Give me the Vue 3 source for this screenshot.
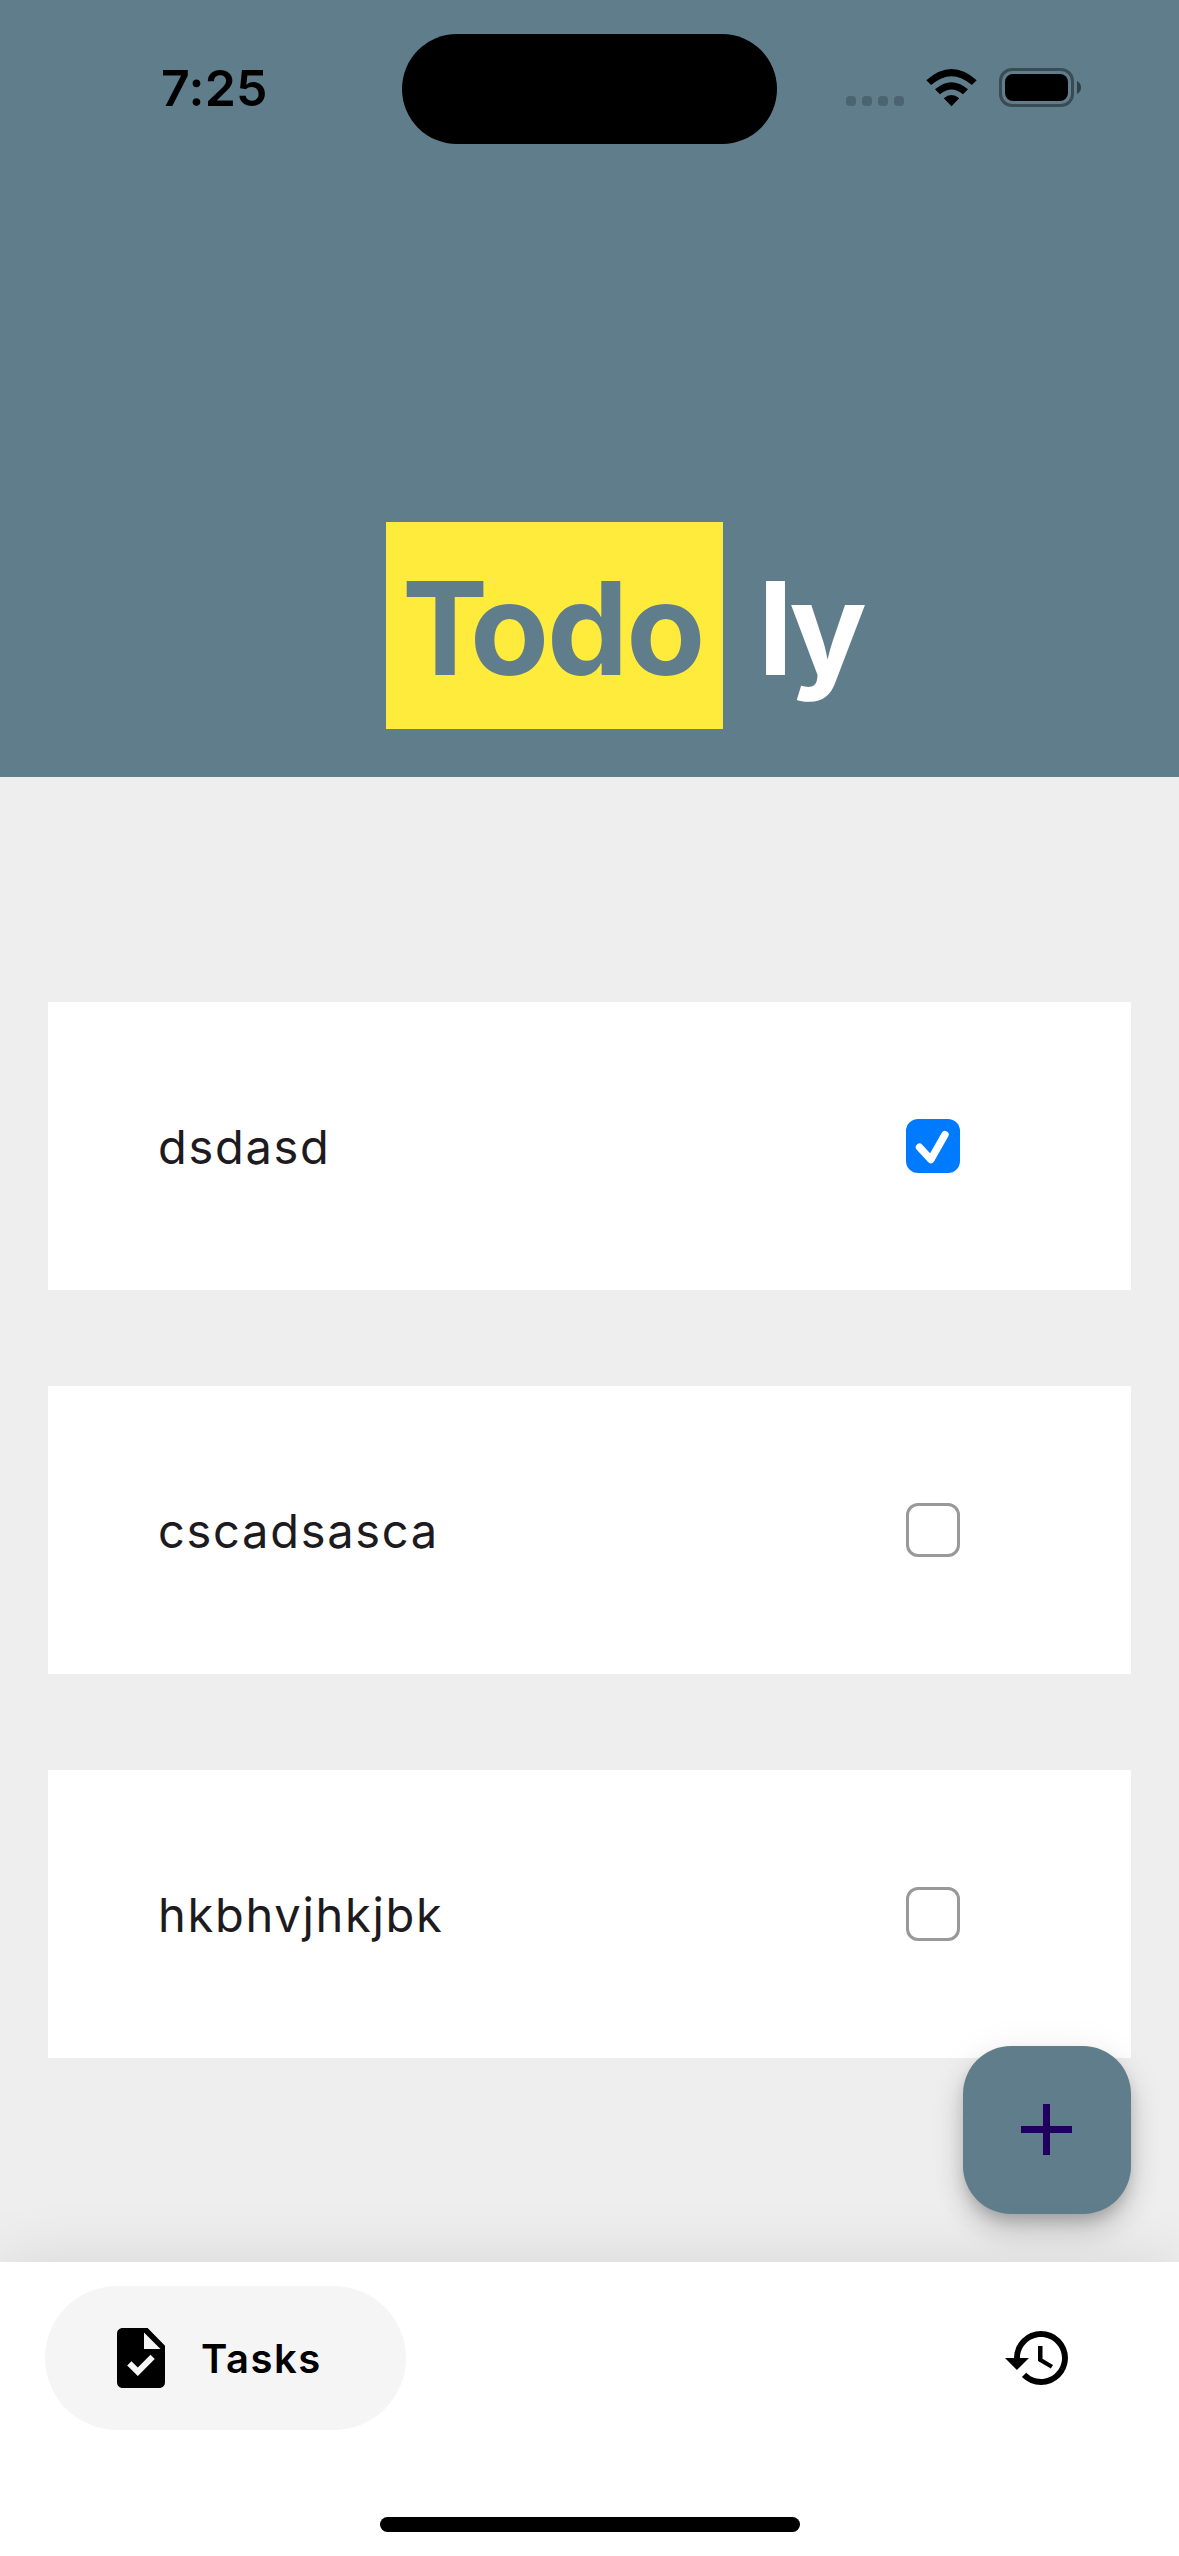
<script setup>
import { ref } from 'vue'

const tasks = ref([
  { id: 1, title: 'dsdasd', done: true },
  { id: 2, title: 'cscadsasca', done: false },
  { id: 3, title: 'hkbhvjhkjbk', done: false },
])
</script>

<template>
  <div class="screen">
    <header class="header">
      <div class="status">
        <span class="time">7:25</span>
        <span class="island"></span>
        <div class="indicators">
          <div class="dots"><i v-for="n in 4" :key="n"></i></div>
          <svg class="wifi" viewBox="0 0 51 38" width="51" height="38">
            <path d="M0.3 11.3Q25.5 -11.2 50.7 11.3L45.9 16.1Q25.5 -1.6 5.1 16.1Z" />
            <path d="M9 20.3Q25.5 6 42 20.3L37 25.3Q25.5 15.6 14 25.3Z" />
            <path d="M17.8 29.2Q25.5 22.6 33.2 29.2L25.5 37.2Z" />
          </svg>
          <svg class="battery" viewBox="0 0 83 39" width="83" height="39">
            <rect x="1.5" y="1.5" width="72" height="36" rx="11.5" fill="none" stroke="#000" stroke-opacity=".4" stroke-width="3" />
            <rect x="6" y="6" width="63" height="27" rx="8" />
            <path d="M78 13q4 2.2 4 6.5T78 26z" fill-opacity=".5" />
          </svg>
        </div>
      </div>
      <h1 class="brand">
        <span class="mark">Todo</span>
        <span class="rest">ly</span>
      </h1>
    </header>

    <main class="list">
      <article v-for="task in tasks" :key="task.id" class="card">
        <span class="title">{{ task.title }}</span>
        <span class="box" :class="{ checked: task.done }">
          <svg v-if="task.done" viewBox="0 0 54 54" width="54" height="54">
            <path d="M13.5 28.2L24.8 40.6L39 15.7" fill="none" stroke="#fff" stroke-width="7.4" stroke-linecap="round" stroke-linejoin="round" />
          </svg>
        </span>
      </article>
    </main>

    <button class="fab" aria-label="Add task">
      <svg viewBox="0 0 51 51" width="51" height="51">
        <path d="M22 0h7v22h22v7H29v22h-7V29H0v-7h22z" />
      </svg>
    </button>

    <nav class="nav">
      <div class="tabs">
        <a class="tab active">
          <svg viewBox="0 0 24 24" width="72" height="72">
            <path d="M14.2 2H6C4.7 2 4 2.8 4 4v16c0 1.2.7 2 2 2h12c1.3 0 2-.8 2-2V7.9zM10.94 18L7.4 14.46l1.41-1.41 2.12 2.12 4.24-4.24 1.41 1.41zM13 9V3.5L18.5 9z" />
          </svg>
          <span>Tasks</span>
        </a>
        <a class="tab history">
          <svg viewBox="0 0 24 24" width="72" height="72">
            <path d="M13 3a9 9 0 0 0-9 9H1l3.89 3.89.07.14L9 12H6c0-3.87 3.13-7 7-7s7 3.13 7 7-3.13 7-7 7c-1.93 0-3.68-.79-4.94-2.06l-1.42 1.42A8.954 8.954 0 0 0 13 21a9 9 0 0 0 0-18zm-1 5v5l4.28 2.54.72-1.21-3.5-2.08V8z" />
          </svg>
        </a>
      </div>
      <span class="home"></span>
    </nav>
  </div>
</template>

<style>
body {
  margin: 0;
}
</style>

<style scoped>
.screen {
  position: relative;
  display: flex;
  flex-direction: column;
  width: 1179px;
  height: 2556px;
  overflow: hidden;
  background: #eee;
  font-family: Inter, 'Liberation Sans', sans-serif;
}

.header {
  display: flex;
  flex-direction: column;
  justify-content: space-between;
  box-sizing: border-box;
  height: 777px;
  padding: 34px 0 48px;
  background: #607d8b;
}

.status {
  display: flex;
  height: 110px;
}

.time {
  box-sizing: border-box;
  width: 402px;
  padding-left: 161px;
  font-size: 50px;
  font-weight: 600;
  letter-spacing: 0.3px;
  line-height: 108px;
}

.island {
  width: 375px;
  border-radius: 55px;
  background: #000;
}

.indicators {
  display: flex;
  align-items: flex-start;
  margin-left: 69px;
}

.dots {
  display: flex;
  gap: 6px;
  margin-top: 62px;
}

.dots i {
  width: 10px;
  height: 10px;
  border-radius: 4px;
  background: rgba(0, 0, 0, 0.2);
}

.wifi {
  margin: 35px 22px 0;
}

.battery {
  margin-top: 34px;
}

.brand {
  display: flex;
  height: 207px;
  margin: 0 0 0 386px;
  font-size: 129px;
  font-weight: 700;
  line-height: 212px;
}

.mark {
  box-sizing: border-box;
  width: 337px;
  padding-left: 16px;
  background: #ffeb3b;
  color: #607d8b;
  letter-spacing: -2.2px;
}

.mark::first-letter {
  letter-spacing: -18px;
}

.rest {
  margin-left: 35px;
  color: #fff;
  letter-spacing: -5px;
}

.list {
  display: flex;
  flex-direction: column;
  gap: 96px;
  padding: 225px 48px 0;
}

.card {
  display: flex;
  align-items: center;
  justify-content: space-between;
  box-sizing: border-box;
  height: 288px;
  padding: 0 171px 0 110px;
  background: #fff;
}

.title {
  color: #1d1b20;
  font-size: 47px;
  letter-spacing: 1.7px;
}

.box {
  box-sizing: border-box;
  width: 54px;
  height: 54px;
  border: 3px solid #999;
  border-radius: 12px;
}

.box.checked {
  border: 0;
  background: #007aff;
}

.box svg {
  display: block;
}

.fab {
  position: absolute;
  right: 48px;
  bottom: 342px;
  display: flex;
  align-items: center;
  justify-content: center;
  box-sizing: border-box;
  width: 168px;
  height: 168px;
  padding: 0 2px 2px 0;
  border: 0;
  border-radius: 48px;
  background: #607d8b;
  box-shadow: 0 9px 15px -3px rgba(0, 0, 0, 0.2), 0 18px 30px rgba(0, 0, 0, 0.14), 0 3px 40px rgba(0, 0, 0, 0.06);
  fill: #21005d;
}

.nav {
  position: relative;
  display: flex;
  flex-direction: column;
  align-items: center;
  justify-content: space-between;
  box-sizing: border-box;
  height: 294px;
  margin-top: auto;
  padding: 24px 0;
  background: #fff;
  box-shadow: 0 0 60px rgba(0, 0, 0, 0.1);
}

.tabs {
  display: flex;
  align-items: center;
  justify-content: space-between;
  box-sizing: border-box;
  width: 100%;
  padding: 0 105px 0 45px;
}

.tab {
  display: flex;
  align-items: center;
}

.active {
  gap: 24px;
  box-sizing: border-box;
  width: 361px;
  height: 144px;
  padding-left: 60px;
  border-radius: 72px;
  background: #f5f5f5;
  font-size: 40px;
  font-weight: 600;
  letter-spacing: 1.5px;
}

.home {
  width: 420px;
  height: 15px;
  border-radius: 8px;
  background: #000;
}
</style>
